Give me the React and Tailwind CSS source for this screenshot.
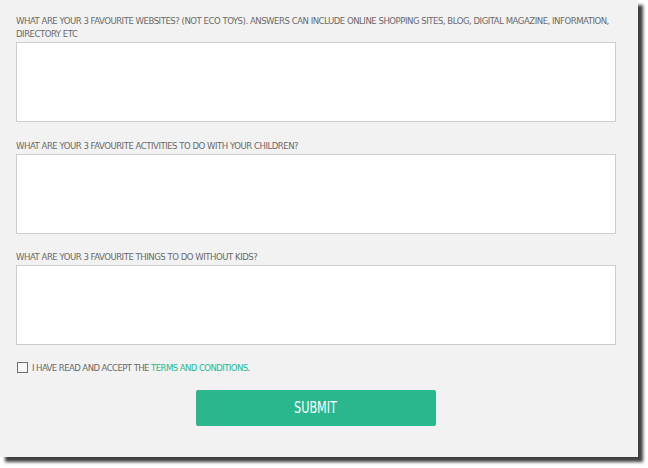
import React from "react";

const font = { fontFamily: '"DejaVu Sans Condensed", "Liberation Sans", sans-serif' };

function Field({ children, className = "" }) {
  return (
    <div className={className}>
      <label className="block text-[9.5px] leading-[13px] tracking-[-0.48px] text-[#6a6a6a] uppercase mb-[2px] whitespace-nowrap">{children}</label>
      <textarea className="block w-full h-[80px] bg-white border border-[#cccccc] resize-none outline-none" />
    </div>
  );
}

export default function App() {
  return (
    <div className="w-[648px] h-[468px] bg-white" style={font}>
      <div className="w-[638px] h-[457px] bg-[#f2f2f2] pl-4 pr-[22px] pt-[14px] shadow-[5px_5px_3px_rgba(0,0,0,0.75)]">
        <Field>
          What are your 3 favourite websites? (Not Eco Toys). Answers can include online shopping sites, blog, digital magazine, information,
          <br />
          directory etc
        </Field>
        <Field className="mt-[17px]">What are your 3 favourite activities to do with your children?</Field>
        <Field className="mt-4">What are your 3 favourite things to do without kids?</Field>
        <div className="mt-4 flex items-center h-[13px] pl-px">
          <span className="w-[11px] h-[11px] border border-[#6f6f6f] bg-[#f7f7f7] shrink-0" />
          <span className="ml-[4px] text-[9.5px] leading-[13px] tracking-[-0.58px] text-[#6a6a6a] uppercase whitespace-nowrap">
            I have read and accept the <span className="text-[#2ab68c]">terms and conditions</span>.
          </span>
        </div>
        <div className="mt-4 flex justify-center">
          <button className="w-[240px] h-[36px] bg-[#2bb78d] text-white rounded-[2px] flex items-center justify-center">
            <span className="inline-block text-[16px] leading-[16px] uppercase scale-x-[0.78]">Submit</span>
          </button>
        </div>
      </div>
    </div>
  );
}
